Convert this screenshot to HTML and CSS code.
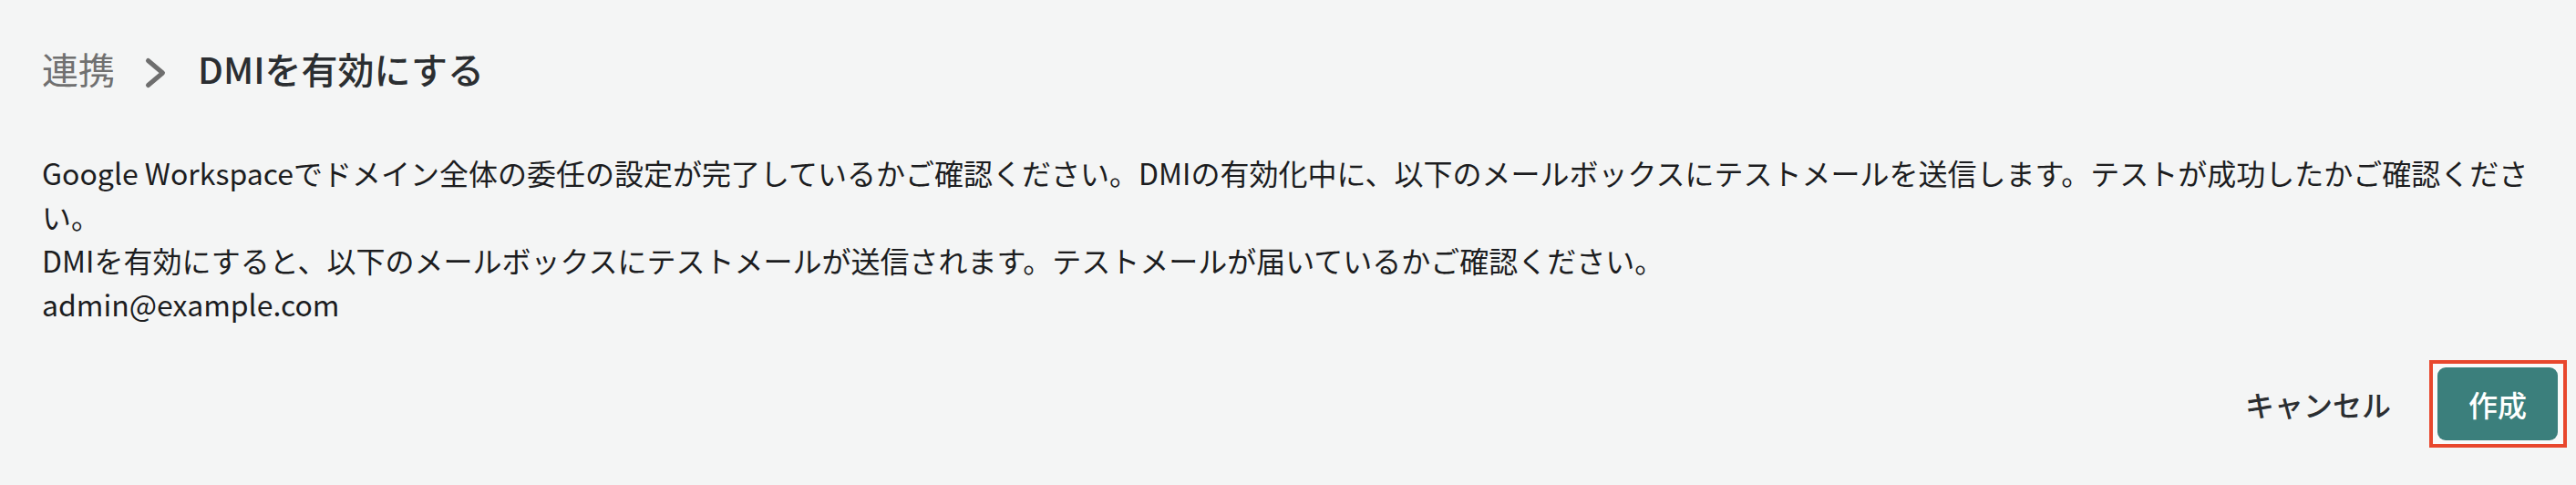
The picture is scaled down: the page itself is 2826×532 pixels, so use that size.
FILE: index.html
```html
<!DOCTYPE html>
<html lang="ja">
<head>
<meta charset="utf-8">
<title>DMIを有効にする</title>
<link rel="stylesheet" href="styles.css">
</head>
<body>
<div class="page">
  <header class="crumbs">
    <span class="crumb-parent">連携</span>
    <svg class="crumb-sep" width="26" height="36" viewBox="0 0 26 36" aria-hidden="true">
      <polyline points="4.5,4.5 20.5,18 4.5,31.5" fill="none" stroke="#6e6e6e" stroke-width="5" stroke-linecap="round" stroke-linejoin="round"/>
    </svg>
    <h1 class="crumb-current">DMIを有効にする</h1>
  </header>
  <section class="message">
    <p>Google Workspaceでドメイン全体の委任の設定が完了しているかご確認ください。DMIの有効化中に、以下のメールボックスにテストメールを送信します。テストが成功したかご確認ください。</p>
    <p>DMIを有効にすると、以下のメールボックスにテストメールが送信されます。テストメールが届いているかご確認ください。</p>
    <p>admin@example.com</p>
  </section>
  <footer class="actions">
    <button class="btn-cancel" type="button">キャンセル</button>
    <span class="highlight">
      <button class="btn-primary" type="button">作成</button>
    </span>
  </footer>
</div>
</body>
</html>
```

FILE: styles.css
```css
html, body {
  margin: 0;
  padding: 0;
  background: #f4f5f5;
}

body {
  font-family: "Noto Sans CJK JP", "Noto Sans", sans-serif;
  color: #1f2022;
}

.page {
  width: 2826px;
  height: 532px;
  display: flex;
  flex-direction: column;
}

.crumbs {
  display: flex;
  align-items: center;
  padding: 45px 46px 0 46px;
  height: 60px;
  font-size: 40px;
  line-height: 60px;
}

.crumb-parent {
  color: #707070;
  font-weight: 400;
}

.crumb-sep {
  margin: 10px 33px 0 32px;
  flex: none;
}

.crumb-current {
  margin: 0;
  font-size: 40px;
  font-weight: 500;
  color: #2b2e31;
}

.message {
  padding: 60px 46px 0 46px;
  font-size: 32px;
  line-height: 48px;
  color: #1c1d1f;
}

.message p {
  margin: 0;
}

.actions {
  display: flex;
  justify-content: flex-end;
  align-items: center;
  gap: 14px;
  padding: 38px 10px 0 46px;
}

.btn-cancel {
  font-family: inherit;
  font-size: 32px;
  font-weight: 500;
  color: #2b2e31;
  background: transparent;
  border: none;
  padding: 0 28px;
  height: 80px;
  line-height: 80px;
}

.highlight {
  display: flex;
  padding: 4px 6px 4px 5px;
  border: 4px solid #e8472d;
  background: #f9f9f9;
}

.btn-primary {
  font-family: inherit;
  font-size: 32px;
  font-weight: 500;
  color: #ffffff;
  background: #3b7f7c;
  border: none;
  border-radius: 9px;
  height: 80px;
  width: 132px;
  padding: 0;
  line-height: 80px;
}
```
